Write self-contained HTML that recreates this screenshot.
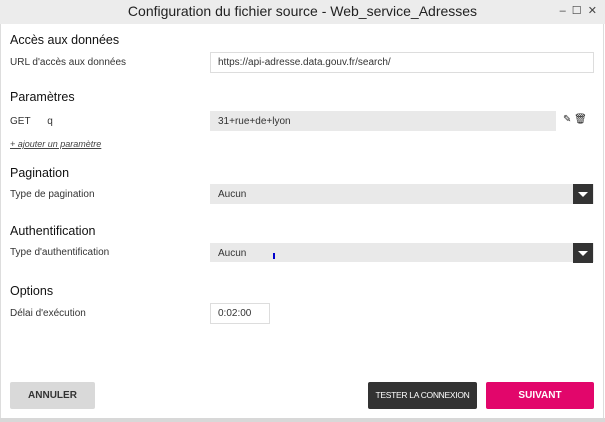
<!DOCTYPE html><html><head><style>
body{margin:0;width:605px;height:422px;overflow:hidden;background:#fff;font-family:"Liberation Sans",sans-serif;position:relative}
.a{position:absolute}
.t{top:0;left:0;width:605px;height:24px;background:#ececec;text-align:center;font-size:14px;line-height:22px;color:#222}
.h{left:10px;font-size:12.5px;color:#111}
.l{left:10px;font-size:10px;color:#333}
.in{left:210px;border:1px solid #ddd;background:#fff;font-size:10px;line-height:19px;padding-left:7px;box-sizing:border-box;color:#333}
.g{background:#e9e9e9;border-color:#e9e9e9}
.ar{width:20px;height:20px;background:#333;right:0;top:-1px}
.ar:after{content:"";position:absolute;left:5px;top:8px;border:5px solid transparent;border-top:5px solid #fff}
.b{top:382px;height:27px;font-size:10px;font-weight:bold;text-align:center;line-height:27px;border-radius:2px;white-space:nowrap}
</style></head><body>
<div class="a t">Configuration du fichier source - Web_service_Adresses<span style="position:absolute;right:8px;font-size:11px;color:#444">–&nbsp; ☐&nbsp; ✕</span></div>
<div class="a" style="left:0;top:24px;width:604px;height:394px;border-left:1px solid #ddd;border-right:1px solid #ddd;box-sizing:border-box"></div>
<div class="a h" style="top:33px">Accès aux données</div>
<div class="a l" style="top:57px">URL d'accès aux données</div>
<div class="a in" style="top:52px;width:384px;height:21px">https://api-adresse.data.gouv.fr/search/</div>
<div class="a h" style="top:90px">Paramètres</div>
<div class="a l" style="top:116px">GET&nbsp;&nbsp;&nbsp;&nbsp;&nbsp; q</div>
<div class="a in g" style="top:111px;width:346px;height:20px">31+rue+de+lyon</div>
<div class="a" style="left:563px;top:114px;font-size:10px;color:#222">✎ 🗑</div>
<div class="a l" style="top:139px;font-size:9px;font-style:italic;text-decoration:underline;color:#444">+ ajouter un paramètre</div>
<div class="a h" style="top:166px">Pagination</div>
<div class="a l" style="top:189px">Type de pagination</div>
<div class="a in g" style="top:184px;width:384px;height:20px">Aucun<div class="a ar"></div></div>
<div class="a h" style="top:224px">Authentification</div>
<div class="a l" style="top:247px">Type d'authentification</div>
<div class="a in g" style="top:243px;width:384px;height:19px">Aucun<div class="a ar"></div></div>
<div class="a" style="left:273px;top:253px;width:2px;height:6px;background:#00c"></div>
<div class="a h" style="top:284px">Options</div>
<div class="a l" style="top:308px">Délai d'exécution</div>
<div class="a in" style="top:303px;width:60px;height:21px">0:02:00</div>
<div class="a b" style="left:10px;width:85px;background:#d9d9d9;color:#333">ANNULER</div>
<div class="a b" style="left:368px;width:109px;background:#333;color:#fff;font-weight:normal;font-size:8.5px;letter-spacing:-0.3px">TESTER LA CONNEXION</div>
<div class="a b" style="left:486px;width:108px;background:#e2066b;color:#fff">SUIVANT</div>
<div class="a" style="left:0;top:418px;width:605px;height:4px;background:#d8d8d8"></div>
</body></html>
